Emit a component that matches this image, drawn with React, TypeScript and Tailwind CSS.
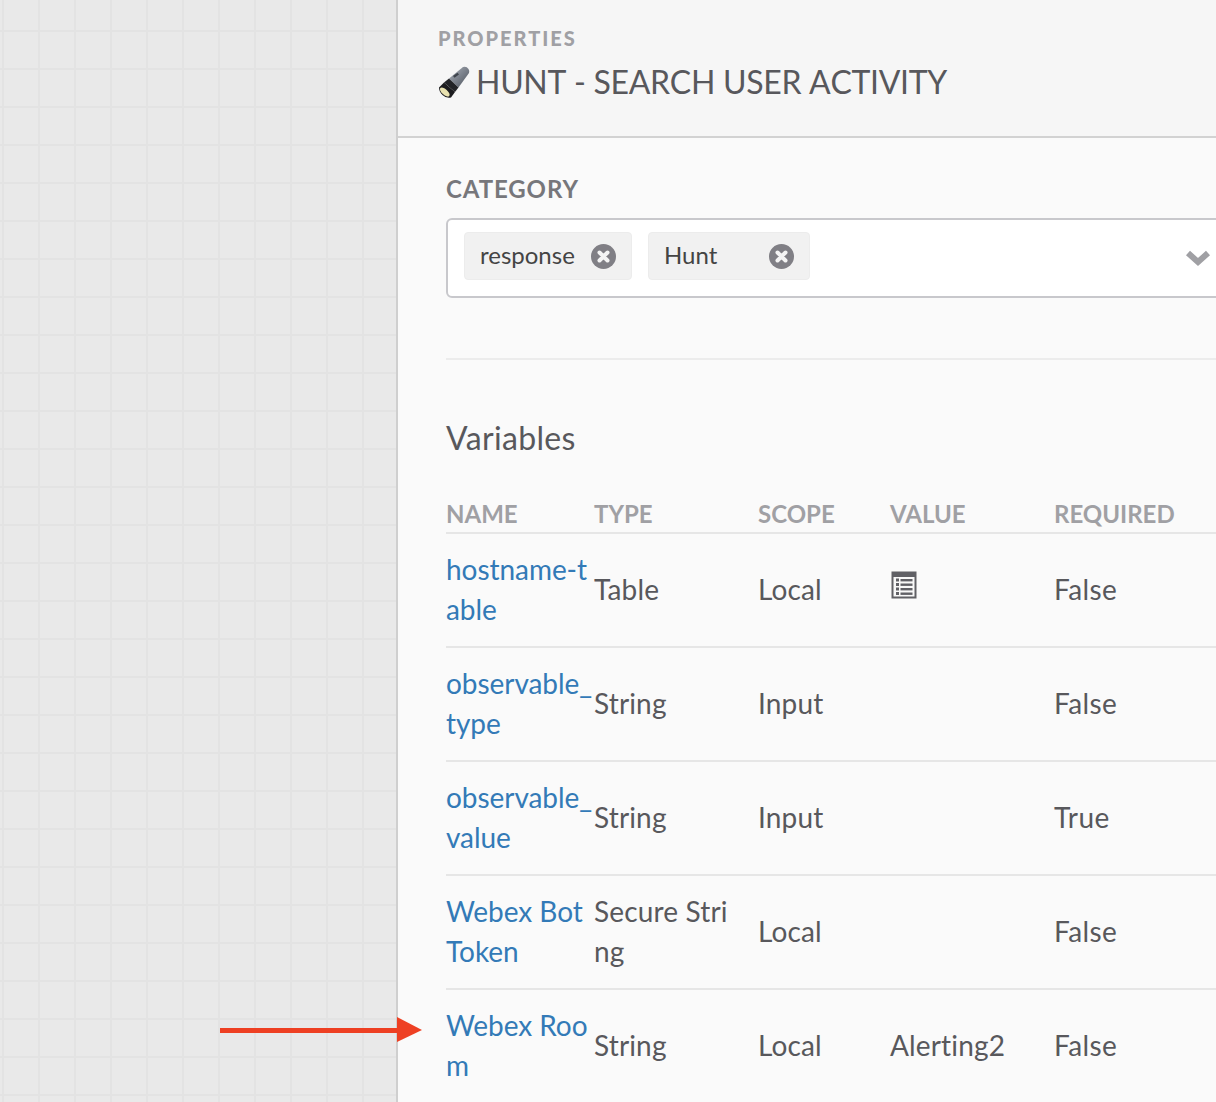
const variables = [
  { name: 'hostname-table', type: 'Table', scope: 'Local', value: 'icon', required: 'False' },
  { name: 'observable_type', type: 'String', scope: 'Input', value: '', required: 'False' },
  { name: 'observable_value', type: 'String', scope: 'Input', value: '', required: 'True' },
  { name: 'Webex Bot Token', type: 'Secure String', scope: 'Local', value: '', required: 'False' },
  { name: 'Webex Room', type: 'String', scope: 'Local', value: 'Alerting2', required: 'False' },
];

function Flashlight() {
  return (
    <svg width="32" height="33" viewBox="0 0 32 33" className="shrink-0">
      <defs>
        <linearGradient id="barrel" x1="0" y1="0" x2="1" y2="1">
          <stop offset="0" stopColor="#aeb3bc" />
          <stop offset="0.5" stopColor="#7b818b" />
          <stop offset="1" stopColor="#4a5059" />
        </linearGradient>
      </defs>
      <path d="M11 12.5 L25 1 Q28.5 0 30.5 3 Q32 5.5 31 7 L20.5 21.5 Z" fill="url(#barrel)" />
      <path d="M15 10 L19.5 6.8 L21 8.4 L16.5 11.8 Z" fill="#3f444c" />
      <path d="M6 16.5 L11 12.5 L20.5 21.5 L17 26 Z" fill="#232427" />
      <path d="M1 21.5 L6 16.5 L17 26 L13 31.5 Q8 32.5 4.5 29 Q1 25.5 1 21.5 Z" fill="#1d1d1f" />
      <ellipse cx="6.8" cy="26" rx="6" ry="2.8" transform="rotate(42 6.8 26)" fill="#e9e2b0" />
    </svg>
  );
}

function ClearDot() {
  return (
    <svg width="25" height="25" viewBox="0 0 25 25" className="shrink-0">
      <circle cx="12.5" cy="12.5" r="12.5" fill="#807f85" />
      <path d="M8.5 8.5 L16.5 16.5 M16.5 8.5 L8.5 16.5" stroke="#f4f4f4" strokeWidth="4" strokeLinecap="round" />
    </svg>
  );
}

function Chip({ label, width }: { label: string; width: string }) {
  return (
    <div className={`flex h-12 items-center justify-between rounded border border-[#ececec] bg-[#f1f1f1] pl-[15px] pr-[15px] text-2xl text-[#444] ${width}`}>
      <span className="mb-[3px]">{label}</span>
      <ClearDot />
    </div>
  );
}

function ListIcon() {
  return (
    <svg width="26" height="28" viewBox="0 0 26 28" className="mb-2 ml-px">
      <rect x="0.5" y="0.5" width="25" height="27" fill="#606065" />
      <rect x="2.5" y="6" width="21" height="19.5" fill="#f8f8f8" />
      {[8, 12.5, 17, 21.5].map((y) => (
        <g key={y} fill="#606065">
          <rect x="5" y={y - 0.5} width="3" height="3" />
          <rect x="9.5" y={y} width="12" height="2.4" />
        </g>
      ))}
    </svg>
  );
}

export default function App() {
  return (
    <div className="relative flex h-[1102px] w-[1216px] overflow-hidden font-['Lato',sans-serif]">
      <div className="h-full w-[396px] shrink-0 bg-[#e9e9e9] bg-[linear-gradient(to_right,#e3e3e3_2px,transparent_2px),linear-gradient(to_bottom,#e3e3e3_2px,transparent_2px)] bg-[length:36px_38px] bg-[position:2px_30px]" />
      <div className="flex h-full flex-1 flex-col border-l-2 border-[#cfcfcf] bg-[#fafafa]">
        <div className="h-[138px] shrink-0 border-b-2 border-[#d2d2d2] bg-[#f6f6f6] pl-10 pt-6">
          <div className="text-xl font-black leading-7 tracking-[2px] text-[#a0a0a4]">PROPERTIES</div>
          <div className="mt-2 flex items-center gap-[6px] text-[32px] leading-[44px] text-[#58585c]">
            <Flashlight />
            <span className="tracking-[-0.3px] [font-kerning:none]">HUNT - SEARCH USER ACTIVITY</span>
          </div>
        </div>
        <div className="pl-12">
          <div className="mt-[37px] text-2xl font-bold leading-7 tracking-[0.9px] text-[#77777b]">CATEGORY</div>
          <div className="mt-[15px] flex h-20 w-[790px] items-center justify-between rounded-md border-2 border-[#c8c8cc] bg-white pl-4 pr-[23px]">
            <div className="mb-1 flex gap-4">
              <Chip label="response" width="w-[168px]" />
              <Chip label="Hunt" width="w-[162px]" />
            </div>
            <svg width="26" height="18" viewBox="0 0 26 18">
              <path d="M3 4 L13 13 L23 4" fill="none" stroke="#a0a0a4" strokeWidth="6" />
            </svg>
          </div>
          <div className="mt-[60px] border-t-2 border-[#ececec]" />
          <h2 className="mt-[58px] text-[32px] leading-10 tracking-[0.35px] text-[#58585c]">Variables</h2>
          <div className="mt-[38px] grid h-[38px] grid-cols-[148px_164px_132px_164px_1fr] border-b-2 border-[#e6e6e6] pt-1 text-2xl font-bold leading-7 text-[#a0a0a4]">
            <div>NAME</div>
            <div>TYPE</div>
            <div>SCOPE</div>
            <div>VALUE</div>
            <div>REQUIRED</div>
          </div>
          {variables.map((v) => (
            <div
              key={v.name}
              className="grid h-[114px] grid-cols-[148px_164px_132px_164px_1fr] items-center border-b-2 border-[#e6e6e6] pb-0.5 text-[28px] leading-10 tracking-[0.15px] text-[#58585c]"
            >
              <a className="break-all tracking-[-0.05px] text-[#337ab7]">{v.name}</a>
              <div className="break-all pr-6">{v.type}</div>
              <div>{v.scope}</div>
              <div>{v.value === 'icon' ? <ListIcon /> : v.value}</div>
              <div className="tracking-[0.4px]">{v.required}</div>
            </div>
          ))}
        </div>
      </div>
      <svg width="204" height="26" viewBox="0 0 204 26" className="absolute left-[220px] top-[1017px]">
        <rect x="0" y="11" width="178" height="5" fill="#ee4023" />
        <path d="M177 0 L202 13 L177 25 Z" fill="#ee4023" />
      </svg>
    </div>
  );
}
